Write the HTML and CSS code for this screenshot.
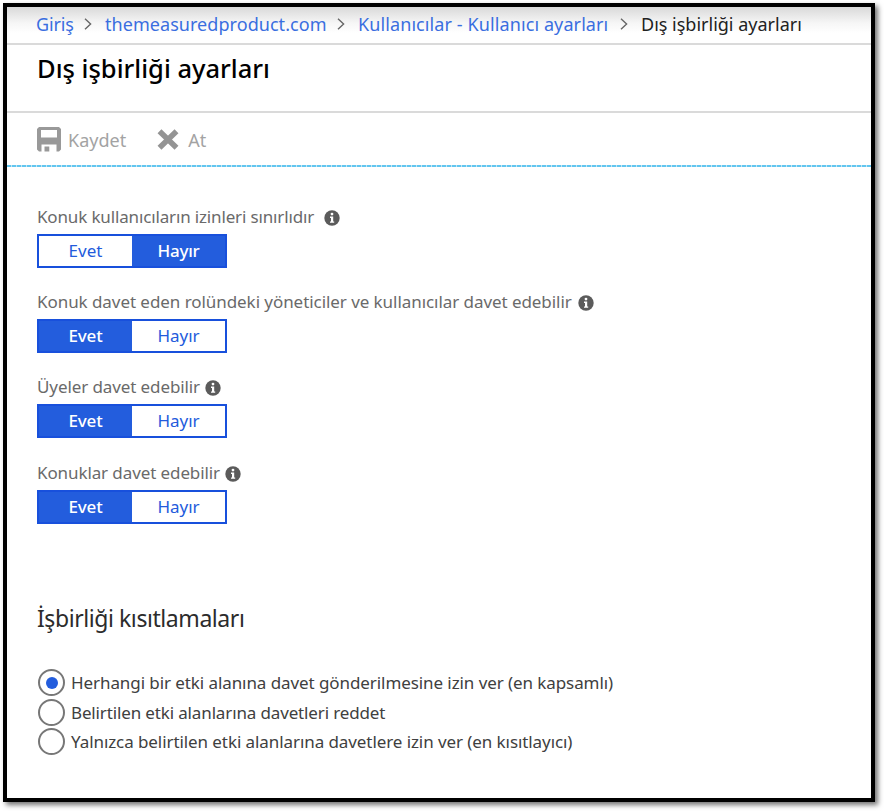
FILE: index.html
```
<!DOCTYPE html>
<html lang="tr">
<head>
<meta charset="utf-8">
<title>Dış işbirliği ayarları</title>
<link rel="stylesheet" href="styles.css">
</head>
<body>
<svg class="defs" width="0" height="0" aria-hidden="true">
  <symbol id="info" viewBox="0 0 16 16"><circle cx="8" cy="8" r="7.7" fill="#5b5b5b"/><circle cx="8" cy="4.1" r="1.4" fill="#fff"/><path d="M6 6.6h3.2v4.800h1v1.400H6v-1.400h1V8H6z" fill="#fff"/></symbol>
  <symbol id="chevron" viewBox="0 0 8 12"><path d="M1 .8 6.6 6 1 11.2" fill="none" stroke="#666" stroke-width="1.4"/></symbol>
</svg>
<main class="blade">
  <nav class="crumbs">
    <a class="crumb home">Giriş</a><svg class="chevron"><use href="#chevron"/></svg>
    <a class="crumb tenant">themeasuredproduct.com</a><svg class="chevron"><use href="#chevron"/></svg>
    <a class="crumb users">Kullanıcılar - Kullanıcı ayarları</a><svg class="chevron"><use href="#chevron"/></svg>
    <span class="crumb current">Dış işbirliği ayarları</span>
  </nav>
  <header class="title"><h1>Dış işbirliği ayarları</h1></header>
  <div class="commands">
    <div class="command save">
      <svg width="24" height="25" viewBox="0 0 24 25"><path fill="#999" fill-rule="evenodd" d="M2 0h20l2 2v20.500l-2 2h-2.500V17.500H4.500v7H2l-2-2V2zM4 3v7.500h16V3z"/><path fill="#999" d="M7.500 19.500h4.800v5H7.500z"/></svg>
      <span>Kaydet</span>
    </div>
    <div class="command discard">
      <svg width="22" height="21" viewBox="0 0 22 21"><path d="M2.500 2.300 19.500 18.700M19.500 2.300 2.500 18.700" stroke="#949494" stroke-width="5.600"/></svg>
      <span>At</span>
    </div>
  </div>
  <section class="settings">
    <div class="setting">
      <div class="label l1"><span>Konuk kullanıcıların izinleri sınırlıdır</span><svg class="info"><use href="#info"/></svg></div>
      <div class="toggle"><span class="opt">Evet</span><span class="opt on">Hayır</span></div>
    </div>
    <div class="setting">
      <div class="label l2"><span>Konuk davet eden rolündeki yöneticiler ve kullanıcılar davet edebilir</span><svg class="info"><use href="#info"/></svg></div>
      <div class="toggle"><span class="opt on">Evet</span><span class="opt">Hayır</span></div>
    </div>
    <div class="setting">
      <div class="label l3"><span>Üyeler davet edebilir</span><svg class="info"><use href="#info"/></svg></div>
      <div class="toggle"><span class="opt on">Evet</span><span class="opt">Hayır</span></div>
    </div>
    <div class="setting">
      <div class="label l4"><span>Konuklar davet edebilir</span><svg class="info"><use href="#info"/></svg></div>
      <div class="toggle"><span class="opt on">Evet</span><span class="opt">Hayır</span></div>
    </div>
  </section>
  <section class="limits">
    <h2>İşbirliği kısıtlamaları</h2>
    <div class="radio r1"><i class="dot checked"></i><span>Herhangi bir etki alanına davet gönderilmesine izin ver (en kapsamlı)</span></div>
    <div class="radio r2"><i class="dot"></i><span>Belirtilen etki alanlarına davetleri reddet</span></div>
    <div class="radio r3"><i class="dot"></i><span>Yalnızca belirtilen etki alanlarına davetlere izin ver (en kısıtlayıcı)</span></div>
  </section>
</main>
</body>
</html>
```
FILE: styles.css
```
* { box-sizing: border-box; }
body { margin: 0; height: 811px; padding: 3px; overflow: hidden; background: #fff; font-family: "Noto Sans", "Open Sans", sans-serif; }
.defs { position: absolute; }
.blade { width: 872px; height: 799px; border: 4px solid #000; background: #fff; box-shadow: 3px 3px 5px rgba(0,0,0,.55); white-space: nowrap; }
.crumbs { display: flex; align-items: center; height: 38px; padding: 0 0 2px 29px; border-bottom: 2px solid #dadada; background: linear-gradient(#d9d9d9, #f6f6f6 16px, #fff 26px); font-size: 18px; }
.crumb { flex: none; color: #3a6ee0; }
.home { width: 37px; letter-spacing: -.15px; }
.tenant { width: 221px; letter-spacing: .05px; }
.users { width: 251px; letter-spacing: .1px; }
.current { color: #222; }
.chevron { flex: none; width: 8px; height: 12px; margin: 0 13px 0 11px; }
.title { height: 68px; padding: 3px 0 0 30px; border-bottom: 2px solid #dadada; }
h1 { margin: 0; font-size: 25.500px; line-height: 40px; font-weight: 500; color: #000; }
.commands { display: flex; height: 54px; padding: 0 0 2px 30px; gap: 31px; background: repeating-linear-gradient(90deg, #62c6f0 0, #62c6f0 4px, #c4e4f0 4px, #c4e4f0 5px) left bottom / 100% 2px no-repeat; font-size: 18px; color: #a3a3a3; }
.command { display: flex; align-items: center; gap: 7px; }
.discard { gap: 9px; }
.command svg { flex: none; }
.command span { padding-top: 2px; }
.settings { padding: 34px 0 0 30px; }
.setting { height: 85.200px; }
.label { display: flex; align-items: center; height: 30px; margin-bottom: 3px; font-size: 17px; letter-spacing: -.06px; color: #6a6a6a; }
.info { flex: none; width: 16px; height: 16px; margin: 3px 0 0 6px; }
.l1 { letter-spacing: -.15px; }
.l1 .info { margin-left: 10px; }
.l3, .l4 { padding-top: 1px; letter-spacing: -.1px; }
.l3 .info, .l4 .info { margin-left: 5px; }
.toggle { display: flex; width: 190px; height: 34px; border: 2px solid #1850dc; background: #fff; }
.opt { flex: 1; text-align: center; font-size: 17px; line-height: 30.500px; color: #235bdc; }
.on { background: #235ddd; color: #fff; font-weight: 500; letter-spacing: -.2px; }
.limits { padding: 56px 0 0 30px; }
h2 { margin: 0 0 30px; font-size: 23px; line-height: 40px; font-weight: 400; letter-spacing: -.43px; color: #2c2c2c; }
.radio { display: flex; align-items: center; height: 29.700px; padding-left: 1px; gap: 6px; font-size: 17px; letter-spacing: -.08px; color: #404040; }
.r2 { letter-spacing: -.14px; }
.dot { display: grid; place-items: center; flex: none; width: 27px; height: 27px; border: 2px solid #777; border-radius: 50%; }
.checked::after { content: ""; width: 12px; height: 12px; border-radius: 50%; background: #235ddd; }
```
